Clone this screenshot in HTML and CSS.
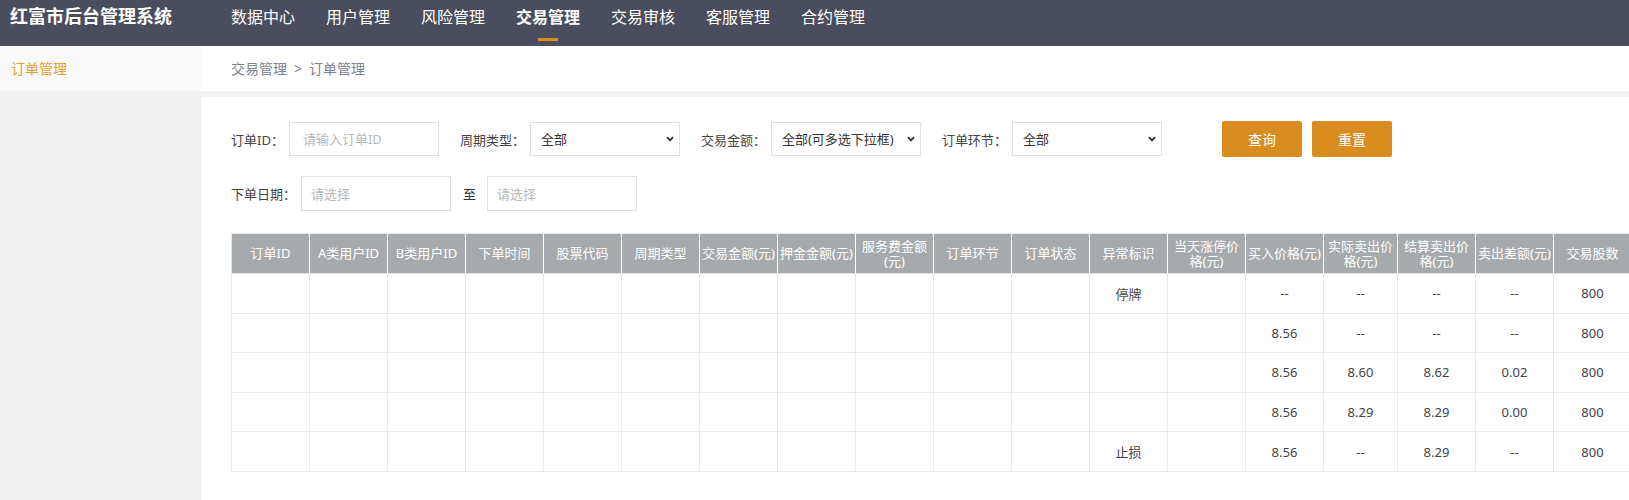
FILE: index.html
```html
<!DOCTYPE html>
<html lang="zh-CN">
<head>
<meta charset="utf-8">
<title>红富市后台管理系统</title>
<link rel="stylesheet" href="styles.css">
</head>
<body>
<header class="topbar">
  <div class="logo">红富市后台管理系统</div>
  <nav class="nav">
    <a class="nav-item">数据中心</a>
    <a class="nav-item">用户管理</a>
    <a class="nav-item">风险管理</a>
    <a class="nav-item active">交易管理</a>
    <a class="nav-item">交易审核</a>
    <a class="nav-item">客服管理</a>
    <a class="nav-item">合约管理</a>
  </nav>
</header>
<div class="layout">
  <aside class="sidebar">
    <div class="side-item active">订单管理</div>
  </aside>
  <main class="main">
    <div class="crumb">交易管理<span class="sep">&gt;</span>订单管理</div>
    <section class="panel">
      <div class="row">
        <label class="field"><span class="lbl">订单ID：</span><input class="inp" placeholder="请输入订单ID"></label>
        <label class="field"><span class="lbl">周期类型：</span>
          <span class="sel"><select><option>全部</option></select><svg class="chev" viewBox="0 0 8 6"><path d="M1 1.2 L4 4.4 L7 1.2" fill="none" stroke="#333" stroke-width="1.8"/></svg></span>
        </label>
        <label class="field"><span class="lbl">交易金额：</span>
          <span class="sel"><select><option>全部(可多选下拉框)</option></select><svg class="chev" viewBox="0 0 8 6"><path d="M1 1.2 L4 4.4 L7 1.2" fill="none" stroke="#333" stroke-width="1.8"/></svg></span>
        </label>
        <label class="field"><span class="lbl">订单环节：</span>
          <span class="sel"><select><option>全部</option></select><svg class="chev" viewBox="0 0 8 6"><path d="M1 1.2 L4 4.4 L7 1.2" fill="none" stroke="#333" stroke-width="1.8"/></svg></span>
        </label>
        <div class="btns">
          <button class="btn">查询</button>
          <button class="btn">重置</button>
        </div>
      </div>
      <div class="row row2">
        <label class="field"><span class="lbl">下单日期：</span><input class="inp date" placeholder="请选择"></label>
        <span class="to">至</span>
        <input class="inp date" placeholder="请选择">
      </div>
      <div class="table-wrap">
        <table class="grid">
          <colgroup>
            <col class="c"><col class="c"><col class="c"><col class="c"><col class="c"><col class="c">
            <col class="c"><col class="c"><col class="c"><col class="c"><col class="c"><col class="c">
            <col class="c"><col class="c"><col class="cn"><col class="c"><col class="c"><col class="c">
          </colgroup>
          <thead>
            <tr>
              <th>订单ID</th><th>A类用户ID</th><th>B类用户ID</th><th>下单时间</th><th>股票代码</th><th>周期类型</th>
              <th>交易金额(元)</th><th>押金金额(元)</th><th>服务费金额<br>(元)</th><th>订单环节</th><th>订单状态</th><th>异常标识</th>
              <th>当天涨停价<br>格(元)</th><th>买入价格(元)</th><th>实际卖出价<br>格(元)</th><th>结算卖出价<br>格(元)</th><th>卖出差额(元)</th><th>交易股数</th>
            </tr>
          </thead>
          <tbody>
            <tr><td></td><td></td><td></td><td></td><td></td><td></td><td></td><td></td><td></td><td></td><td></td><td>停牌</td><td></td><td>--</td><td>--</td><td>--</td><td>--</td><td>800</td></tr>
            <tr><td></td><td></td><td></td><td></td><td></td><td></td><td></td><td></td><td></td><td></td><td></td><td></td><td></td><td>8.56</td><td>--</td><td>--</td><td>--</td><td>800</td></tr>
            <tr><td></td><td></td><td></td><td></td><td></td><td></td><td></td><td></td><td></td><td></td><td></td><td></td><td></td><td>8.56</td><td>8.60</td><td>8.62</td><td>0.02</td><td>800</td></tr>
            <tr><td></td><td></td><td></td><td></td><td></td><td></td><td></td><td></td><td></td><td></td><td></td><td></td><td></td><td>8.56</td><td>8.29</td><td>8.29</td><td>0.00</td><td>800</td></tr>
            <tr><td></td><td></td><td></td><td></td><td></td><td></td><td></td><td></td><td></td><td></td><td></td><td>止损</td><td></td><td>8.56</td><td>--</td><td>8.29</td><td>--</td><td>800</td></tr>
          </tbody>
        </table>
      </div>
    </section>
  </main>
</div>
</body>
</html>
```

FILE: styles.css
```css
html, body {
  margin: 0;
  padding: 0;
  overflow: hidden;
}
body {
  font-family: "Noto Sans", "Noto Sans CJK SC", sans-serif;
  background: #f1f1f1;
  color: #333;
}

/* top bar */
.topbar {
  display: flex;
  height: 46px;
  background: #4a4d5e;
  color: #fff;
}
.logo {
  width: 201px;
  flex: none;
  box-sizing: border-box;
  padding-left: 10px;
  font-size: 18px;
  font-weight: bold;
  line-height: 33px;
  white-space: nowrap;
}
.nav {
  display: flex;
  margin-left: 30px;
}
.nav-item {
  display: flex;
  flex-direction: column;
  align-items: center;
  margin-right: 31px;
  font-size: 16px;
  line-height: 34px;
  color: #fff;
  text-decoration: none;
  white-space: nowrap;
}
.nav-item.active {
  font-weight: bold;
}
.nav-item.active::after {
  content: "";
  display: block;
  width: 20px;
  height: 3px;
  margin-top: 4px;
  background: #d98c20;
}

/* layout */
.layout {
  display: flex;
  min-height: 454px;
}
.sidebar {
  width: 201px;
  flex: none;
  background: #f1f1f1;
}
.side-item {
  height: 45px;
  line-height: 45px;
  padding-left: 11px;
  background: #f9f9f9;
  color: #e3a035;
  font-size: 14px;
}
.main {
  flex: 1;
  min-width: 0;
  display: flex;
  flex-direction: column;
  gap: 6px;
  overflow: hidden;
}
.crumb {
  height: 45px;
  line-height: 45px;
  background: #fff;
  padding-left: 30px;
  font-size: 14px;
  color: #7e8294;
  white-space: nowrap;
}
.crumb .sep {
  margin: 0 7px;
}
.panel {
  flex: 1;
  background: #fff;
  padding: 24px 0 0 30px;
}

/* filters */
.row {
  display: flex;
  align-items: center;
}
.row2 {
  margin-top: 19px;
}
.field {
  display: flex;
  align-items: center;
  margin-right: 21px;
}
.lbl {
  font-size: 13px;
  color: #444;
  margin-right: 5px;
  white-space: nowrap;
}
.inp {
  width: 150px;
  height: 34px;
  box-sizing: border-box;
  border: 1px solid #e1e1e1;
  border-radius: 0;
  padding: 0 13px;
  font-family: inherit;
  font-size: 13px;
  color: #333;
  outline: none;
  background: #fff;
}
.inp.date {
  height: 35px;
  padding: 0 9px;
}
.inp::placeholder {
  color: #b8b8b8;
}
.sel {
  position: relative;
  display: block;
  width: 150px;
  height: 34px;
}
.sel select {
  -webkit-appearance: none;
  appearance: none;
  width: 100%;
  height: 100%;
  box-sizing: border-box;
  border: 1px solid #e1e1e1;
  border-radius: 0;
  padding: 0 0 0 10px;
  background: #fff;
  font-family: inherit;
  font-size: 13px;
  color: #333;
  outline: none;
}
.chev {
  position: absolute;
  right: 6px;
  top: 14px;
  width: 8px;
  height: 6px;
  pointer-events: none;
}
.btns {
  display: flex;
  gap: 10px;
  margin-left: 39px;
}
.btn {
  width: 80px;
  height: 36px;
  border: 0;
  border-radius: 2px;
  background: #d98c20;
  color: #fff;
  font-family: inherit;
  font-size: 14px;
  padding: 0;
}
.to {
  font-size: 13px;
  color: #333;
  margin: 0 11px 0 -9px;
}

/* table */
.table-wrap {
  margin-top: 22px;
  overflow: hidden;
}
.grid {
  border-collapse: collapse;
  table-layout: fixed;
  width: 1400px;
  font-size: 13px;
}
.grid col.c {
  width: 78px;
}
.grid col.cn {
  width: 74px;
}
.grid th {
  height: 39px;
  padding: 0 1px;
  background: #a7aaad;
  color: #fff;
  font-weight: normal;
  line-height: 15px;
  white-space: nowrap;
  text-align: center;
  border: 1px solid #e6e6e6;
  border-left-color: #fff;
  border-right-color: #fff;
}
.grid th:first-child {
  border-left-color: #e6e6e6;
}
.grid td {
  height: 38.6px;
  padding: 0;
  text-align: center;
  color: #444;
  border: 1px solid #e9e9e9;
}
```
